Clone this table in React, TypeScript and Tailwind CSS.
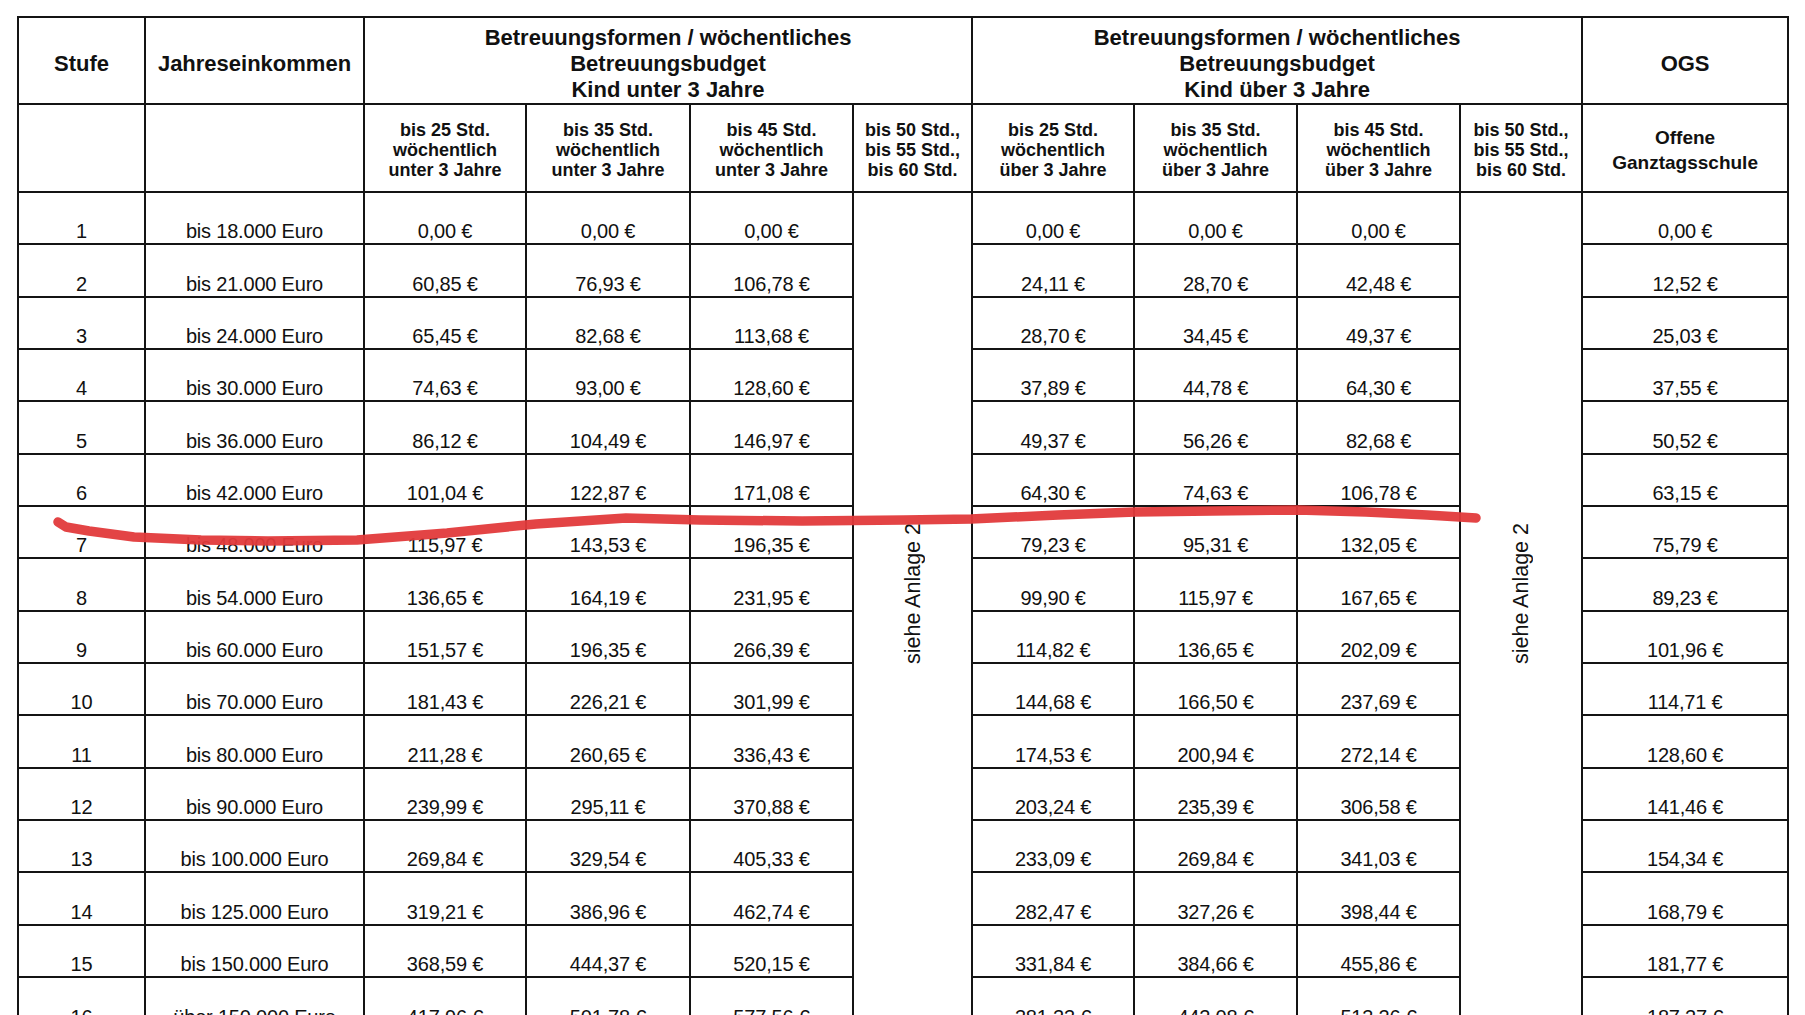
import { memo } from 'react'

type Row = {
  stufe: string
  einkommen: string
  unter: [string, string, string]
  ueber: [string, string, string]
  ogs: string
}

const rows: Row[] = [
  { stufe: '1', einkommen: 'bis 18.000 Euro', unter: ['0,00', '0,00', '0,00'], ueber: ['0,00', '0,00', '0,00'], ogs: '0,00' },
  { stufe: '2', einkommen: 'bis 21.000 Euro', unter: ['60,85', '76,93', '106,78'], ueber: ['24,11', '28,70', '42,48'], ogs: '12,52' },
  { stufe: '3', einkommen: 'bis 24.000 Euro', unter: ['65,45', '82,68', '113,68'], ueber: ['28,70', '34,45', '49,37'], ogs: '25,03' },
  { stufe: '4', einkommen: 'bis 30.000 Euro', unter: ['74,63', '93,00', '128,60'], ueber: ['37,89', '44,78', '64,30'], ogs: '37,55' },
  { stufe: '5', einkommen: 'bis 36.000 Euro', unter: ['86,12', '104,49', '146,97'], ueber: ['49,37', '56,26', '82,68'], ogs: '50,52' },
  { stufe: '6', einkommen: 'bis 42.000 Euro', unter: ['101,04', '122,87', '171,08'], ueber: ['64,30', '74,63', '106,78'], ogs: '63,15' },
  { stufe: '7', einkommen: 'bis 48.000 Euro', unter: ['115,97', '143,53', '196,35'], ueber: ['79,23', '95,31', '132,05'], ogs: '75,79' },
  { stufe: '8', einkommen: 'bis 54.000 Euro', unter: ['136,65', '164,19', '231,95'], ueber: ['99,90', '115,97', '167,65'], ogs: '89,23' },
  { stufe: '9', einkommen: 'bis 60.000 Euro', unter: ['151,57', '196,35', '266,39'], ueber: ['114,82', '136,65', '202,09'], ogs: '101,96' },
  { stufe: '10', einkommen: 'bis 70.000 Euro', unter: ['181,43', '226,21', '301,99'], ueber: ['144,68', '166,50', '237,69'], ogs: '114,71' },
  { stufe: '11', einkommen: 'bis 80.000 Euro', unter: ['211,28', '260,65', '336,43'], ueber: ['174,53', '200,94', '272,14'], ogs: '128,60' },
  { stufe: '12', einkommen: 'bis 90.000 Euro', unter: ['239,99', '295,11', '370,88'], ueber: ['203,24', '235,39', '306,58'], ogs: '141,46' },
  { stufe: '13', einkommen: 'bis 100.000 Euro', unter: ['269,84', '329,54', '405,33'], ueber: ['233,09', '269,84', '341,03'], ogs: '154,34' },
  { stufe: '14', einkommen: 'bis 125.000 Euro', unter: ['319,21', '386,96', '462,74'], ueber: ['282,47', '327,26', '398,44'], ogs: '168,79' },
  { stufe: '15', einkommen: 'bis 150.000 Euro', unter: ['368,59', '444,37', '520,15'], ueber: ['331,84', '384,66', '455,86'], ogs: '181,77' },
  { stufe: '16', einkommen: 'über 150.000 Euro', unter: ['417,96', '501,78', '577,56'], ueber: ['381,23', '442,08', '513,26'], ogs: '187,27' },
]

// points of the hand drawn marker stroke, page coordinates
const strokePoints = [
  [58, 522], [66, 527], [89, 531], [134, 537], [201, 540], [268, 541], [357, 540],
  [447, 533], [536, 524], [626, 518], [700, 520], [802, 521], [904, 520], [971, 519],
  [1058, 515], [1135, 512], [1212, 511], [1298, 510], [1366, 512], [1427, 515], [1476, 518],
]

const cell = 'border-2 border-[#141414] p-0'
const body = `${cell} h-[52.35px] align-bottom text-center text-[20px] leading-[23px] tracking-[-0.2px]`
const sub = `${cell} align-middle text-center text-[18px] font-bold leading-[20px] pt-[3px]`

const App = memo(function App() {
  const d = strokePoints.map(([x, y], i) => `${i ? 'L' : 'M'}${x} ${y}`).join(' ')

  return (
    <div className="relative min-h-screen overflow-hidden bg-white font-['Liberation_Sans',Arial,sans-serif] text-[#111]">
      <table className="ml-[17px] mt-[16px] w-[1772px] table-fixed border-collapse">
        <colgroup>
          <col className="w-[127px]" />
          <col className="w-[219px]" />
          <col className="w-[162px]" />
          <col className="w-[164px]" />
          <col className="w-[163px]" />
          <col className="w-[119px]" />
          <col className="w-[162px]" />
          <col className="w-[163px]" />
          <col className="w-[163px]" />
          <col className="w-[122px]" />
          <col className="w-[206px]" />
        </colgroup>
        <thead>
          <tr className="h-[87px]">
            <th className={`${cell} align-middle pt-[6px] text-[22px] leading-[26px] font-bold`}>Stufe</th>
            <th className={`${cell} align-middle pt-[6px] text-[22px] leading-[26px] font-bold`}>Jahreseinkommen</th>
            <th colSpan={4} className={`${cell} align-middle pt-[7px] text-[22px] leading-[26px] font-bold`}>
              Betreuungsformen / wöchentliches
              <br />
              Betreuungsbudget
              <br />
              Kind unter 3 Jahre
            </th>
            <th colSpan={4} className={`${cell} align-middle pt-[7px] text-[22px] leading-[26px] font-bold`}>
              Betreuungsformen / wöchentliches
              <br />
              Betreuungsbudget
              <br />
              Kind über 3 Jahre
            </th>
            <th className={`${cell} align-middle pt-[6px] text-[22px] leading-[26px] font-bold`}>OGS</th>
          </tr>
          <tr className="h-[88px]">
            <th className={cell} />
            <th className={cell} />
            <SubHead lines={['bis 25 Std.', 'wöchentlich', 'unter 3 Jahre']} />
            <SubHead lines={['bis 35 Std.', 'wöchentlich', 'unter 3 Jahre']} />
            <SubHead lines={['bis 45 Std.', 'wöchentlich', 'unter 3 Jahre']} />
            <SubHead lines={['bis 50 Std.,', 'bis 55 Std.,', 'bis 60 Std.']} />
            <SubHead lines={['bis 25 Std.', 'wöchentlich', 'über 3 Jahre']} />
            <SubHead lines={['bis 35 Std.', 'wöchentlich', 'über 3 Jahre']} />
            <SubHead lines={['bis 45 Std.', 'wöchentlich', 'über 3 Jahre']} />
            <SubHead lines={['bis 50 Std.,', 'bis 55 Std.,', 'bis 60 Std.']} />
            <th className={`${cell} align-middle text-center text-[19px] font-bold leading-[25px] pt-[3px]`}>
              Offene
              <br />
              Ganztagsschule
            </th>
          </tr>
        </thead>
        <tbody>
          {rows.map((row, i) => (
            <tr key={row.stufe}>
              <td className={body}>{row.stufe}</td>
              <td className={body}>{row.einkommen}</td>
              {row.unter.map((v, j) => (
                <td key={j} className={body}>{v} €</td>
              ))}
              {i === 0 && <AnlageCell />}
              {row.ueber.map((v, j) => (
                <td key={j} className={body}>{v} €</td>
              ))}
              {i === 0 && <AnlageCell />}
              <td className={body}>{row.ogs} €</td>
            </tr>
          ))}
        </tbody>
      </table>

      <svg
        className="pointer-events-none absolute left-0 top-0"
        width={1805}
        height={1015}
        viewBox="0 0 1805 1015"
      >
        <path
          d={d}
          fill="none"
          stroke="#e23a3b"
          strokeWidth={9.5}
          strokeLinecap="round"
          strokeLinejoin="round"
          opacity={0.95}
        />
      </svg>
    </div>
  )
})

const SubHead = memo(function SubHead({ lines }: { lines: string[] }) {
  return (
    <th className={sub}>
      {lines.map((l, i) => (
        <div key={i}>{l}</div>
      ))}
    </th>
  )
})

const AnlageCell = memo(function AnlageCell() {
  return (
    <td rowSpan={rows.length} className={`${cell} align-top pt-[330px]`}>
      <div className="flex justify-center">
        <span className="rotate-180 text-[21.5px] leading-[24px] [writing-mode:vertical-rl]">siehe  Anlage 2</span>
      </div>
    </td>
  )
})

export default App
